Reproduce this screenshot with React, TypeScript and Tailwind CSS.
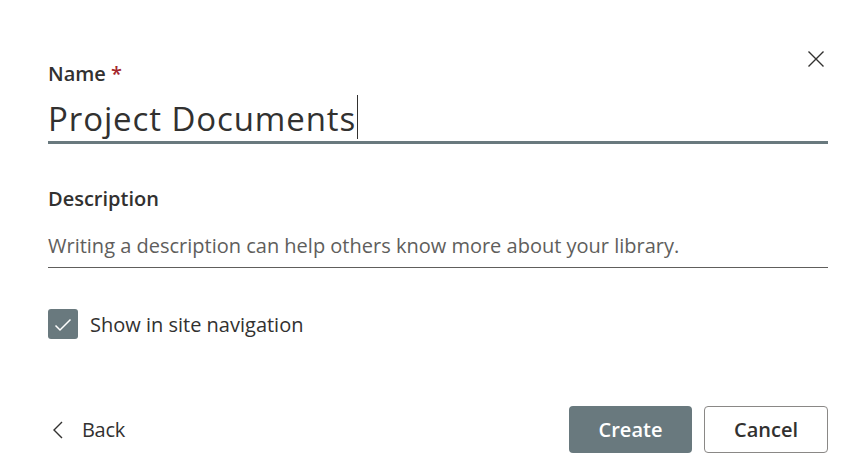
import { useState } from "react";

const font = { fontFamily: '"Open Sans", "Noto Sans", sans-serif' };

export default function App() {
  const [checked, setChecked] = useState(true);

  return (
    <div
      className="relative w-[867px] h-[470px] bg-white px-12 text-[#323130] font-['Open_Sans','Noto_Sans',sans-serif]"
      style={font}
    >
      {/* close */}
      <button className="absolute left-[801px] top-[44px] w-[29px] h-[29px] flex items-center justify-center" aria-label="Close">
        <svg width="16" height="16" viewBox="0 0 16 16" fill="none">
          <path d="M0.5 0.5L15.5 15.5M15.5 0.5L0.5 15.5" stroke="#323130" strokeWidth="1.4" />
        </svg>
      </button>

      <div className="w-[780px] pt-[60px]">
        {/* Name */}
        <label className="block text-[20px] leading-[28px] font-semibold">
          Name <span className="text-[#a4262c]">*</span>
        </label>
        <div className="mt-[7px] flex items-end pb-[2px] border-b-[3px] border-[#69797e]">
          <span className="text-[33px] leading-[40px] font-medium tracking-[0.9px]">Project Documents</span>
          <div className="w-px h-[44px] bg-[#323130] ml-[1px]" />
        </div>

        {/* Description */}
        <label className="block mt-[41px] text-[20px] leading-[28px] font-semibold">
          Description
        </label>
        <div className="mt-[19px] pb-[7px] border-b border-[#605e5c]">
          <span className="block text-[20px] leading-[28px] text-[#605e5c]">
            Writing a description can help others know more about your library.
          </span>
        </div>

        {/* Checkbox */}
        <div className="mt-[41px] flex items-center gap-3">
          <button
            onClick={() => setChecked(!checked)}
            className="w-[30px] h-[30px] rounded-[3px] bg-[#69797e] flex items-center justify-center"
          >
            {checked && (
              <svg width="30" height="30" viewBox="0 0 30 30" fill="none">
                <path d="M7.5 16.5L12 21L22.5 10.5" stroke="white" strokeWidth="1.5" />
              </svg>
            )}
          </button>
          <span className="text-[20px] leading-[28px] mt-[1px]">Show in site navigation</span>
        </div>

        {/* Footer */}
        <div className="mt-[67px] flex items-center justify-between">
          <button className="flex items-center h-[47px]">
            <svg width="12" height="18" viewBox="0 0 12 18" fill="none" className="ml-[4px]">
              <path d="M10 1L2 9L10 17" stroke="#323130" strokeWidth="1.4" />
            </svg>
            <span className="ml-[18px] text-[20px] leading-[28px] tracking-[-0.3px]">Back</span>
          </button>
          <div className="flex gap-3">
            <button className="w-[123px] h-[47px] rounded-[4px] bg-[#69797e] text-white text-[20px] font-semibold">
              Create
            </button>
            <button className="w-[124px] h-[47px] rounded-[4px] border border-[#8a8886] bg-white text-[#323130] text-[20px] font-semibold">
              Cancel
            </button>
          </div>
        </div>
      </div>
    </div>
  );
}
